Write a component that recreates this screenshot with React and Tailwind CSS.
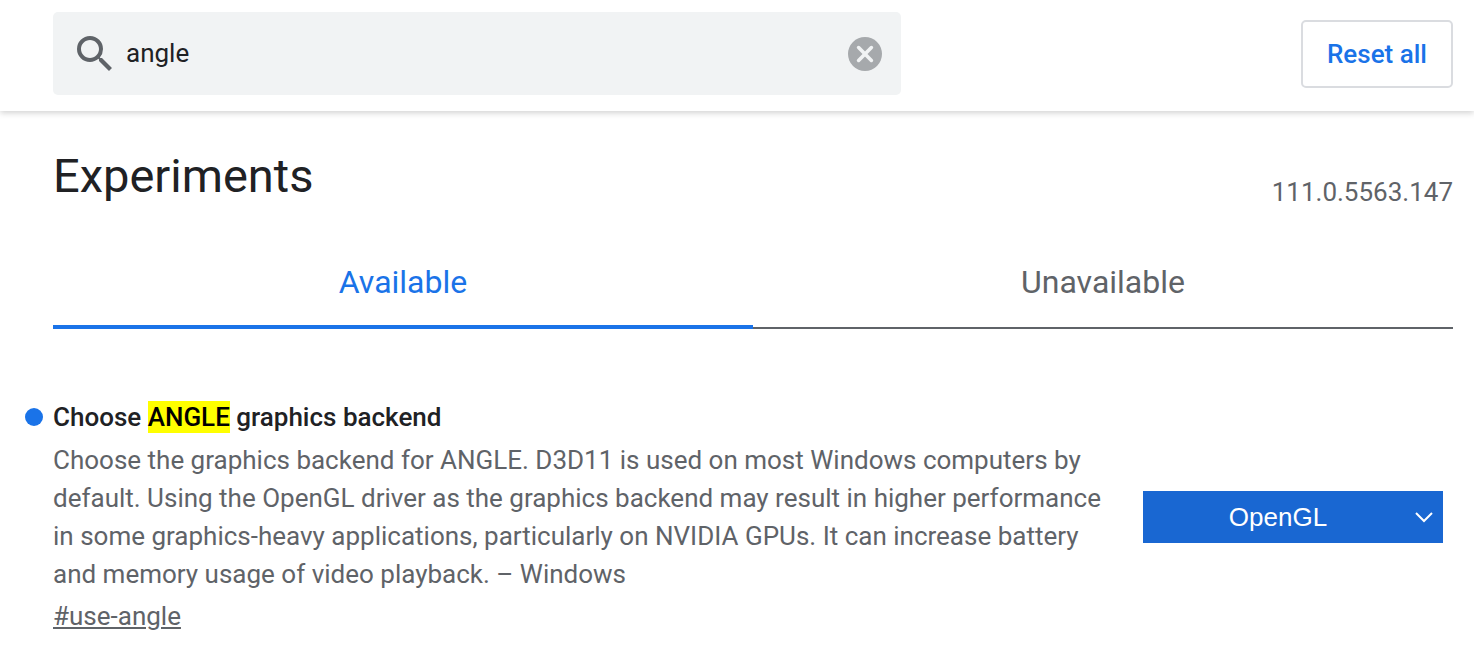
import React, { useState } from "react";

function SearchIcon() {
  return (
    <svg viewBox="3 3 17.5 17.5" className="size-[35px] shrink-0" fill="#5f6368" aria-hidden="true">
      <path d="M15.5 14h-.79l-.28-.27A6.47 6.47 0 0 0 16 9.5 6.5 6.5 0 1 0 9.5 16c1.61 0 3.09-.59 4.23-1.57l.27.28v.79l5 4.99L20.49 19l-4.99-5zm-6 0C7.01 14 5 11.99 5 9.5S7.01 5 9.5 5 14 7.01 14 9.5 11.99 14 9.5 14z" />
    </svg>
  );
}

function ClearIcon() {
  return (
    <svg viewBox="0 0 34 34" className="size-[34px]" aria-hidden="true">
      <circle cx="17" cy="17" r="17" fill="#a6a9ac" />
      <path d="M10.6 10.6 L23.4 23.4 M23.4 10.6 L10.6 23.4" stroke="#f1f3f4" strokeWidth="3.6" strokeLinecap="round" />
    </svg>
  );
}

function Header({ query, setQuery }) {
  return (
    <header className="flex items-start justify-between gap-6 bg-white pt-3 pr-[21px] pb-4 pl-[53px] shadow-[0_2px_6px_rgba(0,0,0,0.18)]">
      <div className="flex h-[83px] max-w-[848px] flex-1 items-center rounded-[5px] bg-[#f1f3f4] pr-[19px] pl-6">
        <SearchIcon />
        <input
          type="text"
          aria-label="Search flags"
          value={query}
          onChange={(e) => setQuery(e.target.value)}
          className="ml-[14px] min-w-0 flex-1 bg-transparent text-[26px] text-[#202124] outline-none"
        />
        <button type="button" aria-label="Clear search" onClick={() => setQuery("")}>
          <ClearIcon />
        </button>
      </div>
      <button
        type="button"
        className="mt-2 h-[68px] shrink-0 rounded-[5px] border-2 border-[#dadce0] px-6 text-[26px] font-medium text-[#1a73e8]"
      >
        Reset all
      </button>
    </header>
  );
}

function Tabs({ active, setActive }) {
  return (
    <div role="tablist" className="mt-8 flex h-[91px] text-[32px]">
      {["Available", "Unavailable"].map((name) => (
        <button
          key={name}
          type="button"
          role="tab"
          aria-selected={active === name}
          onClick={() => setActive(name)}
          className={
            active === name
              ? "flex-1 border-b-4 border-[#1a73e8] text-[#1a73e8]"
              : "flex-1 border-b-2 border-[#5f6368] pb-0.5 text-[#5f6368]"
          }
        >
          {name}
        </button>
      ))}
    </div>
  );
}

export default function App() {
  const [query, setQuery] = useState("angle");
  const [active, setActive] = useState("Available");
  return (
    <div className="min-h-screen bg-white font-['Roboto',sans-serif] text-[#202124]">
      <Header query={query} setQuery={setQuery} />
      <main className="pr-[21px] pl-[53px]">
        <div className="flex items-end justify-between pt-9">
          <h1 className="pb-px text-[47px] leading-[58px]">Experiments</h1>
          <span className="text-[26px] leading-7 text-[#5f6368]">111.0.5563.147</span>
        </div>
        <Tabs active={active} setActive={setActive} />
        <section className="flex items-center gap-[30px] pt-[69px] pr-[10px]">
          <div className="flex-1 text-[26px] leading-[38px] text-[#5f6368]">
            <h2 className="relative font-medium text-[#202124]">
              <span className="absolute top-[10px] -left-7 size-[18px] rounded-full bg-[#1a73e8]" />
              Choose <mark className="bg-[#ffff00] py-px text-black">ANGLE</mark> graphics backend
            </h2>
            <p className="mt-[5px]">
              Choose the graphics backend for ANGLE. D3D11 is used on most Windows computers by default. Using the OpenGL driver as the graphics backend may result in higher performance in some graphics-heavy applications, particularly on NVIDIA GPUs. It can increase battery and memory usage of video playback. – Windows
            </p>
            <a href="#use-angle" className="mt-1 inline-block underline">
              #use-angle
            </a>
          </div>
          <div className="relative flex shrink-0 items-center">
            <select
              aria-label="Choose ANGLE graphics backend"
              defaultValue="OpenGL"
              className="h-[52px] w-[300px] appearance-none bg-[#1967d2] pt-0.5 pr-[30px] text-center font-['Liberation_Sans',sans-serif] text-[26px] text-white [text-align-last:center]"
            >
              <option>OpenGL</option>
            </select>
            <svg viewBox="0 0 20 12" className="pointer-events-none absolute right-[9px] h-3 w-5" fill="none" aria-hidden="true">
              <path d="M2 2 L10 10 L18 2" stroke="white" strokeWidth="2" />
            </svg>
          </div>
        </section>
      </main>
    </div>
  );
}
